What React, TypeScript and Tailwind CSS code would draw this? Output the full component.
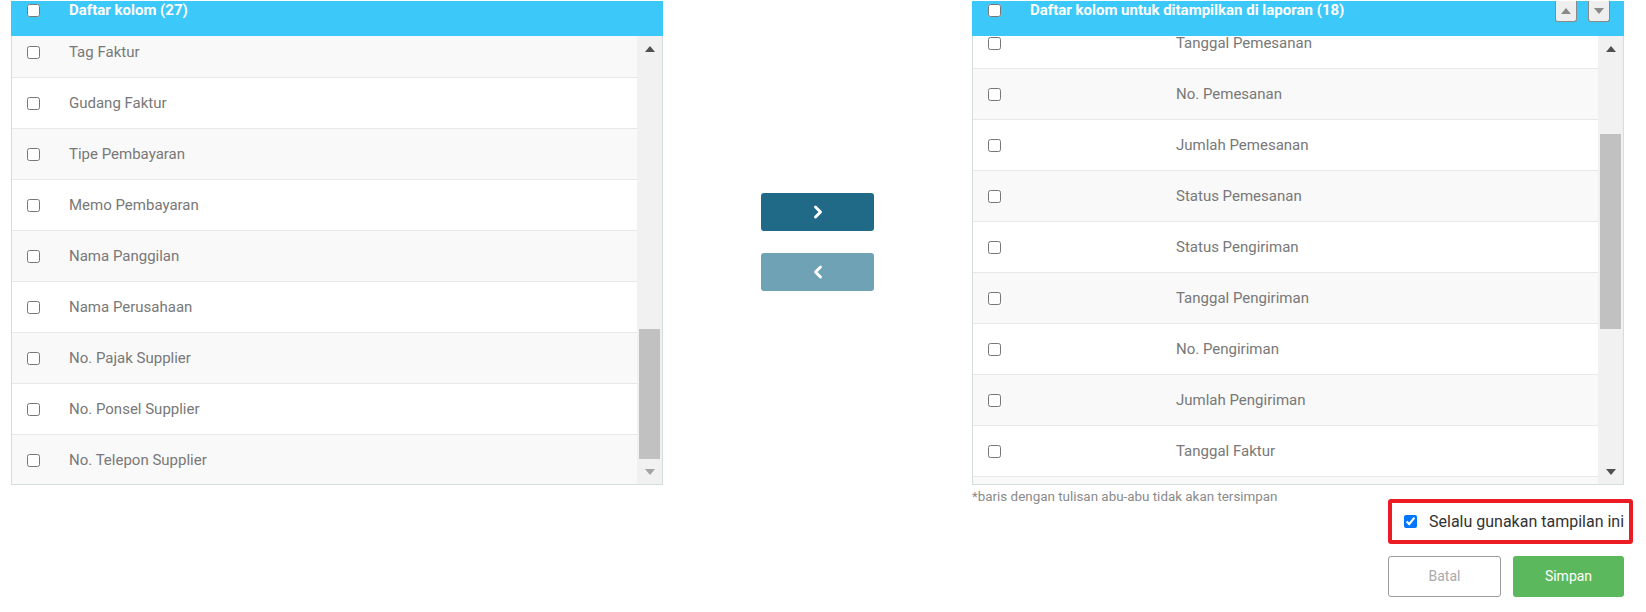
import { ChevronLeft, ChevronRight } from 'lucide-react';

const leftRows = [
  'Tag Faktur',
  'Gudang Faktur',
  'Tipe Pembayaran',
  'Memo Pembayaran',
  'Nama Panggilan',
  'Nama Perusahaan',
  'No. Pajak Supplier',
  'No. Ponsel Supplier',
  'No. Telepon Supplier',
];

const rightRows = [
  'Tanggal Pemesanan',
  'No. Pemesanan',
  'Jumlah Pemesanan',
  'Status Pemesanan',
  'Status Pengiriman',
  'Tanggal Pengiriman',
  'No. Pengiriman',
  'Jumlah Pengiriman',
  'Tanggal Faktur',
  '',
];

function Arrow({ up, color }: { up?: boolean; color: string }) {
  return (
    <svg width="10" height="6" viewBox="0 0 10 6">
      <polygon points={up ? '0,6 5,0 10,6' : '0,0 10,0 5,6'} fill={color} />
    </svg>
  );
}

function Scrollbar({ thumbTop, thumbHeight, downColor }: { thumbTop: number; thumbHeight: number; downColor: string }) {
  return (
    <div className="flex w-[25px] flex-col bg-[#f1f1f1]">
      <div className="flex h-[25px] items-center justify-center pl-[1px]">
        <Arrow up color="#505050" />
      </div>
      <div className="flex flex-1 flex-col">
        <div style={{ height: thumbTop }} />
        <div className="ml-[2px] w-[21px] bg-[#c1c1c1]" style={{ height: thumbHeight }} />
      </div>
      <div className="flex h-[25px] items-center justify-center pl-[1px]">
        <Arrow color={downColor} />
      </div>
    </div>
  );
}

function Panel({
  title,
  rows,
  offset,
  firstGray,
  textGap,
  thumbTop,
  thumbHeight,
  downColor,
  sortButtons,
}: {
  title: string;
  rows: string[];
  offset: number;
  firstGray: boolean;
  textGap: string;
  thumbTop: number;
  thumbHeight: number;
  downColor: string;
  sortButtons?: boolean;
}) {
  return (
    <div className="w-[652px]">
      <div className="flex h-[35px] items-start bg-[#3dc8fa]">
        <input type="checkbox" className="m-0 ml-[16px] mt-[3px] h-[13px] w-[13px]" />
        <span className="ml-[29px] text-[15px] font-bold leading-[18px] text-white">{title}</span>
        {sortButtons && (
          <div className="ml-auto mr-[14px] flex gap-[11px]">
            <button className="flex h-[21px] w-[22px] items-center justify-center rounded-b-[3px] border border-t-0 border-[#8a8a8a] bg-[#eeeeee]">
              <Arrow up color="#8a8a8a" />
            </button>
            <button className="flex h-[21px] w-[22px] items-center justify-center rounded-b-[3px] border border-t-0 border-[#8a8a8a] bg-[#eeeeee]">
              <Arrow color="#8a8a8a" />
            </button>
          </div>
        )}
      </div>
      <div className="flex h-[449px] border-x border-b border-[#d3dede]">
        <div className="flex-1 overflow-hidden">
          <div style={{ marginTop: -offset }}>
            {rows.map((r, i) => (
              <div
                key={i}
                className={`flex h-[51px] items-center border-b border-[#e8e8e8] ${
                  (i % 2 === 0) === firstGray ? 'bg-[#f9f9f9]' : 'bg-white'
                }`}
              >
                <input type="checkbox" className="m-0 ml-[15px] h-[13px] w-[13px]" />
                {r && <span className={`${textGap} text-[15px] text-[#787878]`}>{r}</span>}
              </div>
            ))}
          </div>
        </div>
        <Scrollbar thumbTop={thumbTop} thumbHeight={thumbHeight} downColor={downColor} />
      </div>
    </div>
  );
}

export default function App() {
  return (
    <div className="h-[612px] w-[1646px] bg-white pt-[1px] font-['Roboto',sans-serif]">
      <div className="flex">
        <div className="ml-[11px]">
          <Panel
            title="Daftar kolom (27)"
            rows={leftRows}
            offset={9}
            firstGray
            textGap="ml-[29px]"
            thumbTop={268}
            thumbHeight={130}
            downColor="#a3a3a3"
          />
        </div>

        <div className="flex w-[309px] flex-col items-center pt-[192px]">
          <button className="flex h-[38px] w-[113px] items-center justify-center rounded-[3px] bg-[#216a87] text-white">
            <ChevronRight size={20} strokeWidth={3.5} />
          </button>
          <button className="mt-[22px] flex h-[38px] w-[113px] items-center justify-center rounded-[3px] bg-[#6fa2b5] text-white">
            <ChevronLeft size={20} strokeWidth={3.5} />
          </button>
        </div>

        <div className="w-[652px]">
          <Panel
            title="Daftar kolom untuk ditampilkan di laporan (18)"
            rows={rightRows}
            offset={18}
            firstGray={false}
            textGap="ml-[175px]"
            thumbTop={73}
            thumbHeight={195}
            downColor="#505050"
            sortButtons
          />
          <div className="flex items-start">
            <p className="mt-[4px] text-[13.4px] leading-[16px] text-[#8a8a8a]">
              *baris dengan tulisan abu-abu tidak akan tersimpan
            </p>
            <div className="-mr-[9px] ml-auto mt-[14px] flex h-[45px] w-[245px] items-center rounded-[3px] border-4 border-[#ec1c24] pl-[12px]">
              <input type="checkbox" defaultChecked className="m-0 h-[13px] w-[13px]" />
              <span className="ml-[12px] text-[16px] text-[#333333]">Selalu gunakan tampilan ini</span>
            </div>
          </div>
          <div className="mt-[12px] flex justify-end gap-[12px]">
            <button className="h-[41px] w-[113px] rounded-[3px] border border-[#9a9a9a] bg-white text-[14px] text-[#aaaaaa]">
              Batal
            </button>
            <button className="h-[41px] w-[111px] rounded-[3px] bg-[#5cb85c] text-[14px] text-white">Simpan</button>
          </div>
        </div>
      </div>
    </div>
  );
}
